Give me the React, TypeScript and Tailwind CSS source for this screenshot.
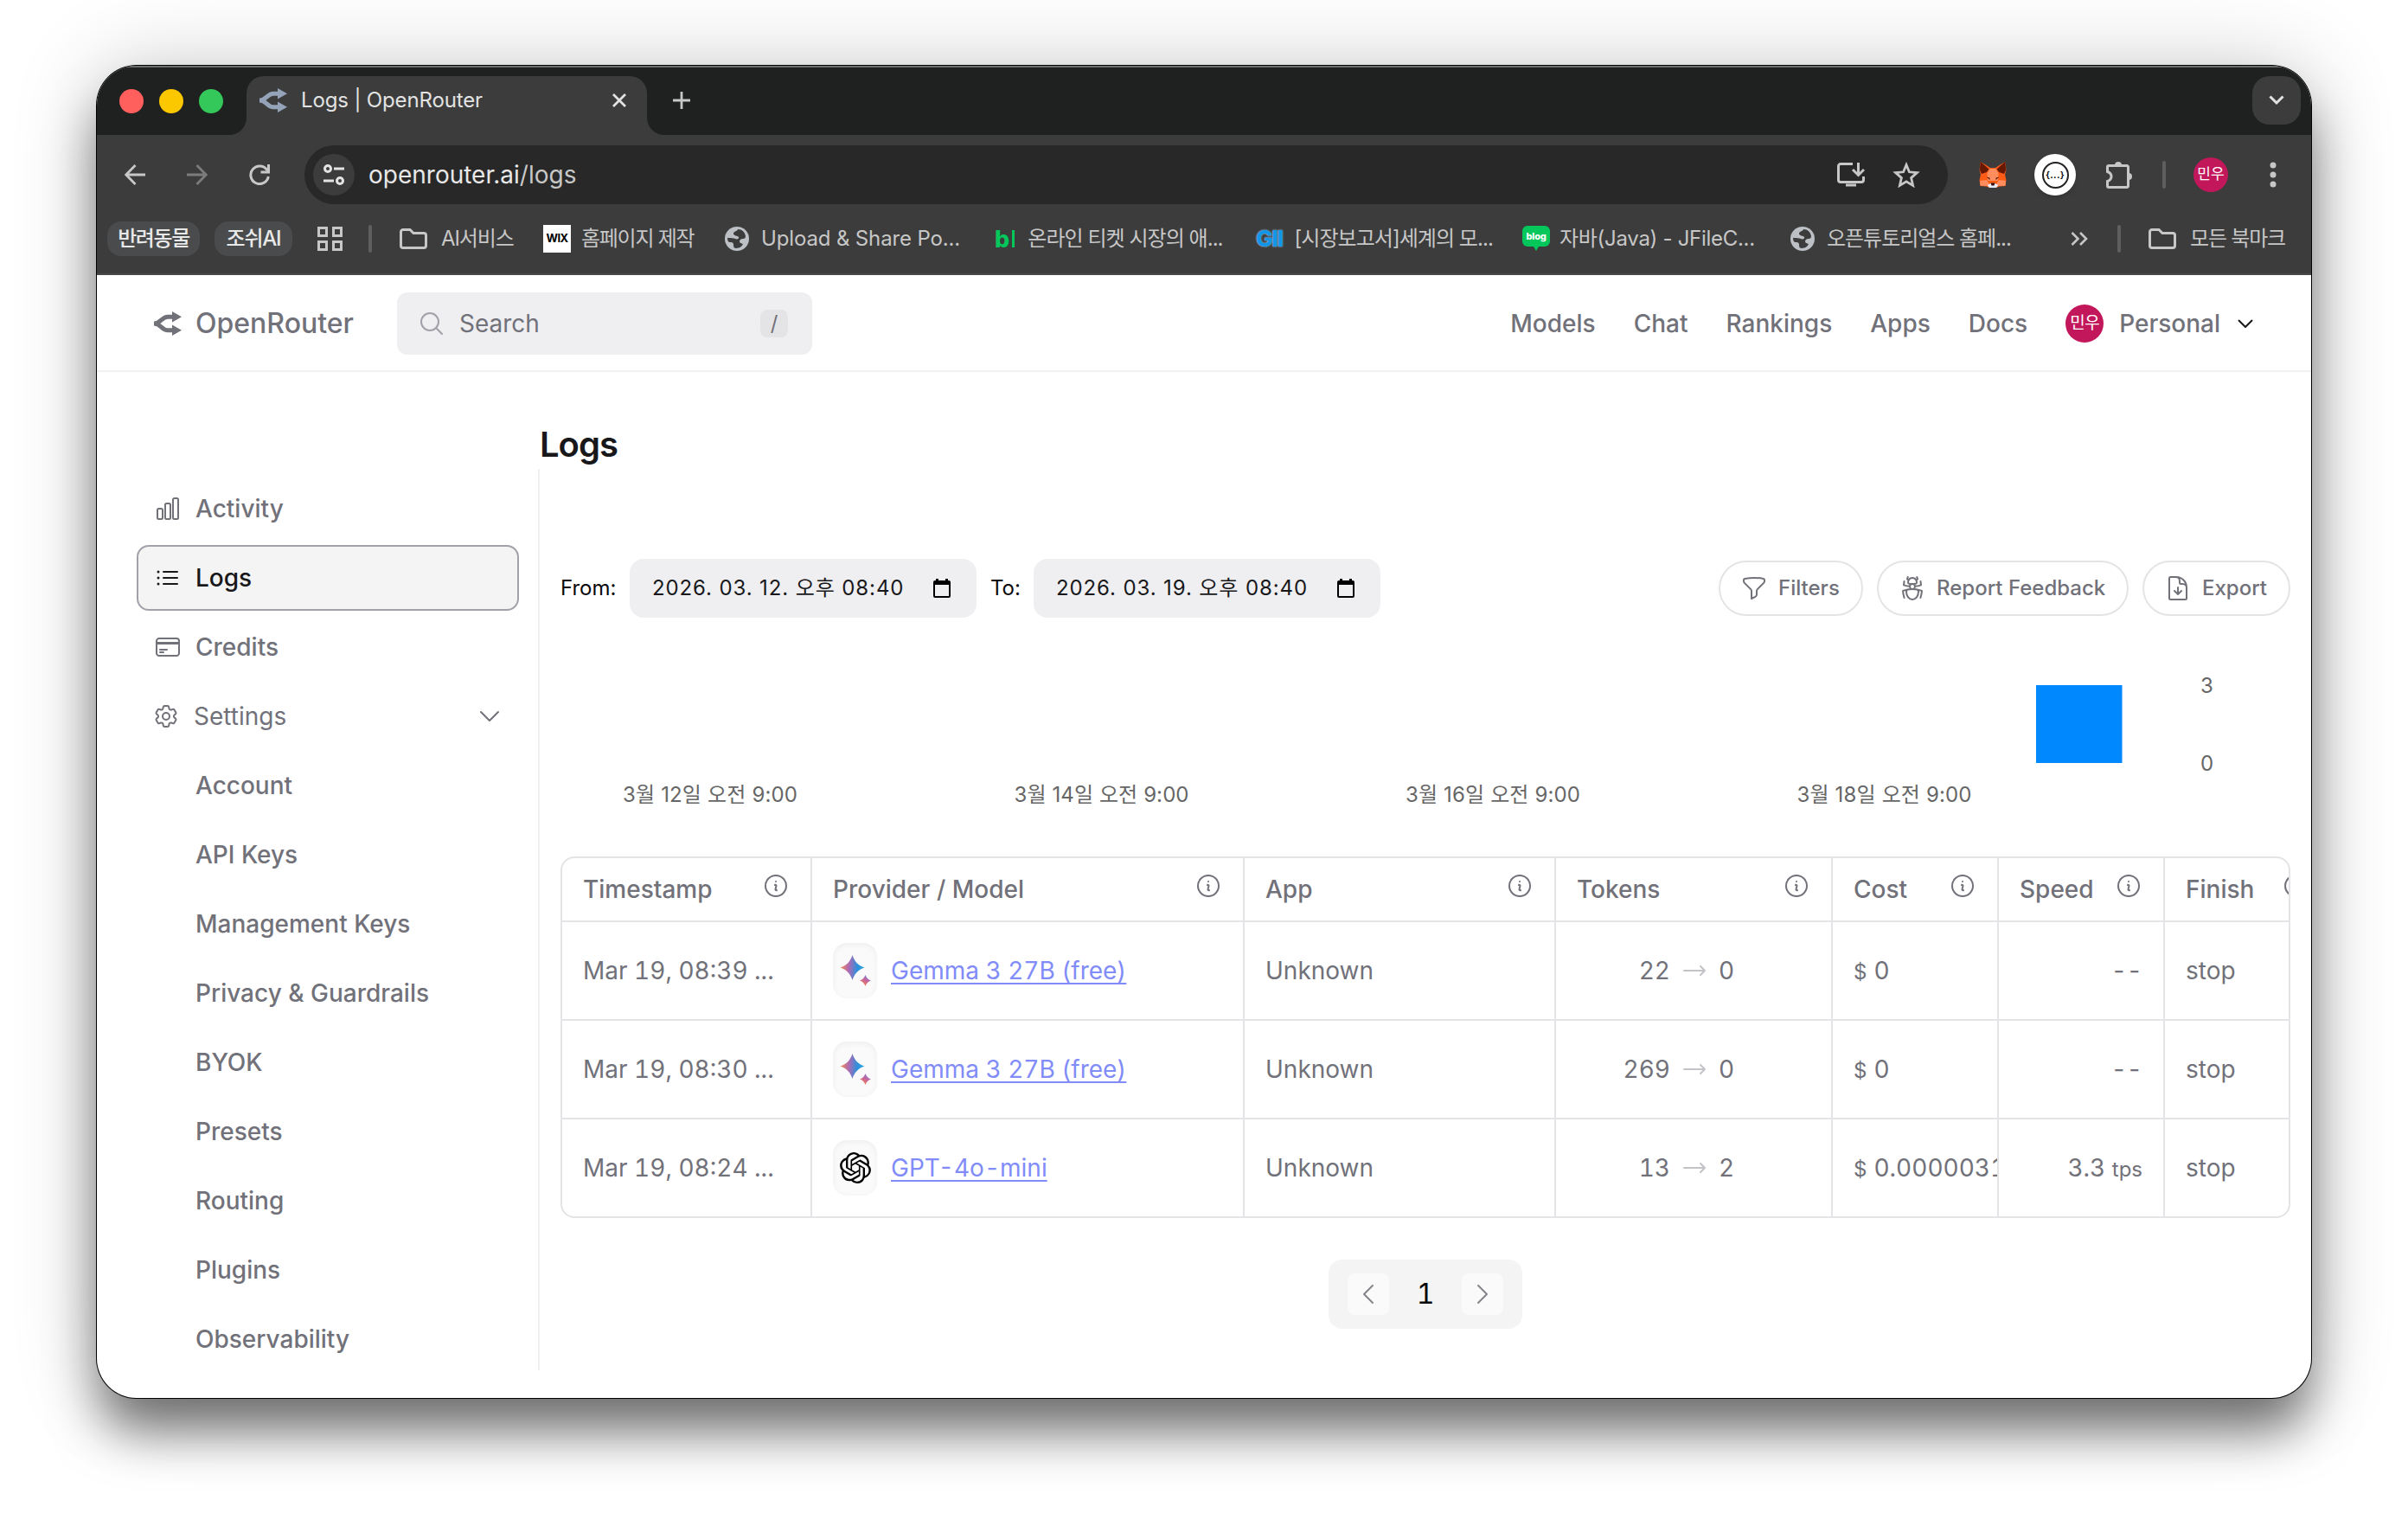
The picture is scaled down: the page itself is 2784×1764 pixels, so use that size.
import { ReactNode } from 'react'
import { SiOpenai } from 'react-icons/si'
import {
  HiOutlineArrowLongRight,
  HiOutlineBugAnt,
  HiOutlineChartBar,
  HiOutlineChevronDown,
  HiOutlineChevronLeft,
  HiOutlineChevronRight,
  HiOutlineCog6Tooth,
  HiOutlineCreditCard,
  HiOutlineDocumentArrowDown,
  HiOutlineFunnel,
  HiOutlineInformationCircle,
  HiOutlineListBullet,
  HiOutlineMagnifyingGlass,
} from 'react-icons/hi2'

/* ------------------------------------------------------------------ */
/*  Data                                                              */
/* ------------------------------------------------------------------ */

const NAV = ['Models', 'Chat', 'Rankings', 'Apps', 'Docs']

const SETTINGS = [
  'Account',
  'API Keys',
  'Management Keys',
  'Privacy & Guardrails',
  'BYOK',
  'Presets',
  'Routing',
  'Plugins',
  'Observability',
]

const ROWS = [
  { time: 'Mar 19, 08:39 ...', icon: 'gemma', model: 'Gemma 3 27B (free)', input: 22, output: 0, cost: '0', speed: null, finish: 'stop' },
  { time: 'Mar 19, 08:30 ...', icon: 'gemma', model: 'Gemma 3 27B (free)', input: 269, output: 0, cost: '0', speed: null, finish: 'stop' },
  { time: 'Mar 19, 08:24 ...', icon: 'openai', model: 'GPT-4o-mini', input: 13, output: 2, cost: '0.0000031', speed: '3.3', finish: 'stop' },
]

const COLUMNS = ['Timestamp', 'Provider / Model', 'App', 'Tokens', 'Cost', 'Speed', 'Finish']

const TICKS = ['3월 12일 오전 9:00', '3월 14일 오전 9:00', '3월 16일 오전 9:00', '3월 18일 오전 9:00']

/* ------------------------------------------------------------------ */
/*  Icons                                                             */
/* ------------------------------------------------------------------ */

function RouterLogo({ className }: { className: string }) {
  return (
    <svg viewBox="0 0 32 28" className={className} fill="none" stroke="currentColor" strokeWidth="5">
      <path d="M0 14C8 14 9 6.200 16 6.200h6M0 14c8 0 9 7.800 16 7.800h6" />
      <path d="M21 0l11 6.200-11 6.200zM21 15.600l11 6.200-11 6.200z" fill="currentColor" stroke="none" />
    </svg>
  )
}

function Globe() {
  return (
    <svg viewBox="0 0 28 28" className="size-7 shrink-0">
      <circle cx="14" cy="14" r="14" fill="#bdc1c6" />
      <path d="M15 3c-1 3-5 2-5 5s5 2 6 4-2 3-4 2-5-1-9-1c0 3 1 5 3 5s4 0 4 3 1 4 3 4c5 0 7-3 8-5-2-1-4-1-4-3s2-3 4-3 3-1 3-3c-1-5-4-8-9-8z" fill="#3c3c3c" />
    </svg>
  )
}

function Folder() {
  return (
    <svg viewBox="0 0 32 24" className="h-6 w-8 shrink-0" fill="none" stroke="#c7c7c7" strokeWidth="3">
      <path d="M4 1.500h8l4 4h12a2.500 2.500 0 0 1 2.500 2.500v12a2.500 2.500 0 0 1-2.500 2.500H4A2.500 2.500 0 0 1 1.500 20V4A2.500 2.500 0 0 1 4 1.500z" />
    </svg>
  )
}

function Fox() {
  return (
    <svg viewBox="0 0 32 30" className="h-[30px] w-8">
      <path d="M2 0l11 7h6l11-7 1.500 9-1.500 6 1.500 6-1 7-7 .500L20 30h-8l-3.500-1.500-7-.500-1-7L2 15 .500 9z" fill="#ff5c16" />
      <path d="M2 0l9.500 8.500L9 12l-6 2L.800 9zM30 0l-9.500 8.500L23 12l6 2 2.200-5z" fill="#661800" />
      <path d="M12.500 8h7l3 5-.500 9h-12l-.500-9z" fill="#ff8d5d" />
      <path d="M1 22l8-1 3 5-4 2-6.500-.500zM31 22l-8-1-3 5 4 2 6.500-.500z" fill="#ff8d5d" />
      <path d="M8.500 17.500l4 1v2.500zM23.500 17.500l-4 1v2.500z" fill="#5c1a08" />
      <path d="M9.500 27l4-2h5l4 2-2.500 3h-8z" fill="#e7ebf6" />
      <path d="M13.500 24.500h5l-1 3h-3z" fill="#33100a" />
    </svg>
  )
}

function Sparkles() {
  return (
    <svg viewBox="0 0 36 36" className="size-9">
      <defs>
        <linearGradient id="big" x1="0" x2="1" y1="0.450" y2="0.500">
          <stop offset="0" stopColor="#f58a4b" />
          <stop offset="0.350" stopColor="#b06ab3" />
          <stop offset="0.700" stopColor="#2f8fdb" />
          <stop offset="1" stopColor="#2ba6de" />
        </linearGradient>
        <linearGradient id="small" x1="0.800" x2="0.300" y1="0" y2="1">
          <stop offset="0" stopColor="#6d7fe0" />
          <stop offset="0.500" stopColor="#c9659a" />
          <stop offset="1" stopColor="#f5854b" />
        </linearGradient>
      </defs>
      <path d="M14.500 0c2.500 7.500 6.500 12 14 14.500-7.500 2.500-11.500 7-14 14.500C12 21.500 8 17 .5 14.500 8 12 12 7.500 14.500 0z" fill="url(#big)" />
      <path d="M29.500 23c1.300 3.500 3 5.200 6.500 6.500-3.500 1.300-5.200 3-6.500 6.500-1.300-3.500-3-5.200-6.500-6.500 3.500-1.300 5.200-3 6.500-6.500z" fill="url(#small)" />
    </svg>
  )
}

function Calendar() {
  return (
    <svg viewBox="0 0 20 22" className="h-[22px] w-5">
      <path d="M3 0h3v2h8V0h3v2h1a2 2 0 0 1 2 2v16a2 2 0 0 1-2 2H2a2 2 0 0 1-2-2V4a2 2 0 0 1 2-2h1zM2 7v13h16V7z" fill="black" fillRule="evenodd" />
    </svg>
  )
}

/* ------------------------------------------------------------------ */
/*  Browser chrome                                                    */
/* ------------------------------------------------------------------ */

function TabStrip() {
  return (
    <div className="flex h-20 shrink-0 items-start bg-[#1f2120] pl-[26px] pr-3 pt-3 shadow-[inset_0_2px_0_#6b6e6b]">
      <div className="mt-[15px] flex gap-[18px]">
        <span className="size-7 rounded-full bg-[#ff5f5d]" />
        <span className="size-7 rounded-full bg-[#fbc800]" />
        <span className="size-7 rounded-full bg-[#34c85a]" />
      </div>
      <div className="relative ml-[27px] flex h-[68px] w-[463px] rounded-t-[20px] bg-[#3c3c3c] pl-[15px] pr-[21px]">
        <svg viewBox="0 0 20 20" className="absolute -left-5 bottom-0 size-5"><path d="M20 0v20H0A20 20 0 0 0 20 0z" fill="#3c3c3c" /></svg>
        <svg viewBox="0 0 20 20" className="absolute -right-5 bottom-0 size-5"><path d="M0 0v20h20A20 20 0 0 1 0 0z" fill="#3c3c3c" /></svg>
        <div className="flex h-14 flex-1 items-center">
          <RouterLogo className="h-7 w-8 text-[#94a3b8]" />
          <span className="ml-4 text-2xl tracking-[-0.006em] text-[#e3e3e3]">Logs | OpenRouter</span>
          <svg viewBox="0 0 16 16" className="ml-auto mr-[3px] size-4" stroke="#e3e3e3" strokeWidth="2.800"><path d="M1 1l14 14M15 1L1 15" /></svg>
        </div>
      </div>
      <svg viewBox="0 0 20 20" className="ml-[30px] mt-[18px] size-5" stroke="#c7c7c7" strokeWidth="2.800"><path d="M10 0v20M0 10h20" /></svg>
      <div className="ml-auto flex size-14 items-center justify-center rounded-[20px] bg-[#3c3c3c]">
        <svg viewBox="0 0 18 12" className="h-3 w-[18px]" fill="none" stroke="#e3e3e3" strokeWidth="3"><path d="M1.500 1.500L9 9l7.500-7.500" /></svg>
      </div>
    </div>
  )
}

function Toolbar() {
  return (
    <div className="flex h-[92px] items-center pl-8 pr-10 text-[#c7c7c7]">
      <svg viewBox="0 0 24 24" className="size-6" fill="none" stroke="#c7c7c7" strokeWidth="2.800"><path d="M12.500 1L1.800 12l10.700 11M2 12h22" /></svg>
      <svg viewBox="0 0 24 24" className="ml-12 size-6" fill="none" stroke="#7c7c7c" strokeWidth="2.800"><path d="M11.500 1l10.700 11-10.700 11M22 12H0" /></svg>
      <svg viewBox="0 0 24 24" className="ml-12 size-6" fill="none" stroke="#c7c7c7" strokeWidth="3"><path d="M21 7a10.300 10.300 0 1 0 1.300 7M22.500 0v9h-9" /></svg>
      <div className="ml-10 flex h-[68px] w-[1900px] items-center rounded-full bg-[#282828] pl-[10px] pr-8">
        <div className="flex size-12 items-center justify-center rounded-full bg-[#3c3c3c]">
          <svg viewBox="0 0 24 24" className="size-6" fill="none" stroke="#e3e3e3" strokeWidth="3">
            <circle cx="5" cy="5" r="3.500" /><path d="M12 5h12M0 19h12" /><circle cx="19" cy="19" r="3.500" />
          </svg>
        </div>
        <span className="ml-4 text-[28px] text-[#c7c7c7]"><span className="text-[#e8e8e8]">openrouter.ai</span>/logs</span>
        <svg viewBox="0 0 32 28" className="ml-auto h-7 w-8" fill="none" stroke="#c7c7c7" strokeWidth="3">
          <path d="M18 1.500H4A2.500 2.500 0 0 0 1.500 4v16A2.500 2.500 0 0 0 4 22.500h24a2.500 2.500 0 0 0 2.500-2.500v-4M24.500 0v13M18 8l6.500 6.500L31 8M10 26h12" />
        </svg>
        <svg viewBox="0 0 32 30" className="ml-8 h-[30px] w-8" fill="none" stroke="#c7c7c7" strokeWidth="2.800">
          <path d="M16 3.500l3.400 8.300 9 .8-6.800 6 2 8.800L16 22.800l-7.600 4.600 2-8.800-6.800-6 9-.8z" />
        </svg>
      </div>
      <div className="ml-9"><Fox /></div>
      <div className="ml-8 flex size-12 items-center justify-center rounded-full bg-white shadow-md">
        <div className="flex size-[31px] items-center justify-center rounded-full border-2 border-[#222]">
          <span className="text-[11px] font-semibold leading-none tracking-wide text-black">{'{...}'}</span>
        </div>
      </div>
      <svg viewBox="0 0 32 32" className="ml-[34px] size-8" fill="none" stroke="#c7c7c7" strokeWidth="3">
        <path d="M4 5.500h21a1.500 1.500 0 0 1 1.500 1.500v22a1.500 1.500 0 0 1-1.500 1.500H4A1.500 1.500 0 0 1 2.500 29v-5.500c6-2 6-9 0-11V7A1.500 1.500 0 0 1 4 5.500z" />
        <path d="M11 5a4 4 0 0 1 8 0zM27 14a4 4 0 0 1 0 8z" fill="#c7c7c7" stroke="none" />
      </svg>
      <span className="ml-[34px] h-8 w-1 rounded-full bg-[#5f5f5f]" />
      <span className="ml-8 flex size-10 items-center justify-center rounded-full bg-[#c2185b] text-[17px] text-white">민우</span>
      <svg viewBox="0 0 8 30" className="ml-12 h-[30px] w-2" fill="#c7c7c7"><circle cx="4" cy="4" r="3.500" /><circle cx="4" cy="15" r="3.500" /><circle cx="4" cy="26" r="3.500" /></svg>
    </div>
  )
}

function Bookmark({ className, icon, children }: { className: string; icon: ReactNode; children: ReactNode }) {
  return (
    <div className={`flex shrink-0 items-center whitespace-nowrap ${className}`}>
      {icon}
      <span>{children}</span>
    </div>
  )
}

function BookmarkBar() {
  return (
    <div className="flex h-10 items-center pl-3 text-2xl text-[#c7c7c7]">
      <span className="flex h-10 w-[107px] shrink-0 items-center justify-center rounded-2xl bg-[#4a4b4d] font-medium tracking-[-0.060em] text-[#e8e8e8]">반려동물</span>
      <span className="ml-[17px] flex h-10 w-[90px] shrink-0 items-center justify-center rounded-2xl bg-[#4a4b4d] font-medium tracking-[-0.050em] text-[#e8e8e8]">조쉬AI</span>
      <svg viewBox="0 0 30 28" className="ml-[29px] h-7 w-[30px] shrink-0" fill="none" stroke="#c7c7c7" strokeWidth="3">
        <path d="M1.500 1.500h9v9h-9zM18.500 1.500h9v9h-9zM1.500 17.500h9v9h-9zM18.500 17.500h9v9h-9z" />
      </svg>
      <span className="ml-[29px] h-8 w-1 shrink-0 rounded-full bg-[#5f5f5f]" />
      <Bookmark className="ml-8 w-[166px] gap-4 tracking-[-0.045em]" icon={<Folder />}>AI서비스</Bookmark>
      <Bookmark
        className="w-[210px] gap-3 tracking-[-0.053em]"
        icon={<span className="flex size-8 items-center justify-center bg-white text-[13px] font-bold tracking-tighter text-black">WIX</span>}
      >
        홈페이지 제작
      </Bookmark>
      <Bookmark className="w-[312px] gap-[14px] tracking-[-0.006em]" icon={<Globe />}>Upload &amp; Share Po...</Bookmark>
      <Bookmark
        className="w-[302px] gap-[15px] tracking-[-0.040em]"
        icon={<span className="flex items-center gap-1 text-[27px] font-extrabold leading-none text-[#03c75a]">b<span className="h-5 w-[3px] bg-[#03c75a]" /></span>}
      >
        온라인 티켓 시장의 애...
      </Bookmark>
      <Bookmark
        className="w-[308px] gap-[14px] tracking-[-0.040em]"
        icon={<span className="text-[26px] font-extrabold leading-none tracking-tighter text-[#1296e8] [text-shadow:0_0_2px_#bfe6ff]">GII</span>}
      >
        [시장보고서]세계의 모...
      </Bookmark>
      <Bookmark
        className="w-[310px] gap-[11px] tracking-[-0.012em]"
        icon={
          <svg viewBox="0 0 32 30" className="h-[30px] w-8 shrink-0">
            <path d="M6 0h20a6 6 0 0 1 6 6v12a6 6 0 0 1-6 6h-7l-3 5-3-5H6a6 6 0 0 1-6-6V6a6 6 0 0 1 6-6z" fill="#03c75a" />
            <text x="16" y="16" textAnchor="middle" fontSize="11" fontWeight="800" fill="#fff" fontFamily="Inter, sans-serif">blog</text>
          </svg>
        }
      >
        자바(Java) - JFileC...
      </Bookmark>
      <Bookmark className="w-[324px] gap-[14px] tracking-[-0.043em]" icon={<Globe />}>오픈튜토리얼스 홈페...</Bookmark>
      <svg viewBox="0 0 20 16" className="h-4 w-5 shrink-0" fill="none" stroke="#c7c7c7" strokeWidth="2.600"><path d="M1.500 1l7 7-7 7M11 1l7 7-7 7" /></svg>
      <span className="ml-[34px] h-8 w-1 shrink-0 rounded-full bg-[#5f5f5f]" />
      <Bookmark className="ml-8 gap-4 tracking-[-0.050em]" icon={<Folder />}>모든 북마크</Bookmark>
    </div>
  )
}

/* ------------------------------------------------------------------ */
/*  Page header and sidebar                                           */
/* ------------------------------------------------------------------ */

function Header() {
  return (
    <header className="flex h-28 shrink-0 items-center border-b-2 border-[#f2f2f2] pl-[66px] pr-[67px] pt-0.5 text-[28px] font-medium text-[#71717a]">
      <RouterLogo className="h-7 w-8" />
      <span className="ml-4 w-[233px] text-[32px]">OpenRouter</span>
      <div className="flex h-[72px] w-[480px] items-center rounded-xl bg-[#efeff1] pl-6 pr-7 font-normal">
        <HiOutlineMagnifyingGlass className="size-8 text-[#a1a1aa]" />
        <span className="ml-4">Search</span>
        <kbd className="ml-auto flex size-8 items-center justify-center rounded-lg bg-[#e4e4e7] font-[Inter] text-2xl">/</kbd>
      </div>
      <nav className="ml-auto flex items-center gap-11">
        {NAV.map(item => <a key={item}>{item}</a>)}
        <div className="flex items-center">
          <span className="flex size-11 items-center justify-center rounded-full bg-[#c2185b] text-[19px] font-normal tracking-tight text-white">민우</span>
          <span className="ml-[18px]">Personal</span>
          <svg viewBox="0 0 18 10" className="ml-5 h-[10px] w-[18px]" fill="none" stroke="#18181b" strokeWidth="2"><path d="M1 1l8 8 8-8" /></svg>
        </div>
      </nav>
    </header>
  )
}

function Sidebar() {
  return (
    <aside className="flex w-[442px] flex-col gap-1 text-[28px] font-medium">
      <div className="flex h-[76px] items-center gap-4 pl-5">
        <HiOutlineChartBar className="size-8" />
        <span>Activity</span>
      </div>
      <div className="flex h-[76px] items-center gap-4 rounded-[14px] border-2 border-[#a1a1aa] bg-[#f4f4f4] pl-[18px] text-[#18181b]">
        <HiOutlineListBullet className="size-8" />
        <span>Logs</span>
      </div>
      <div className="flex h-[76px] items-center gap-4 pl-5">
        <HiOutlineCreditCard className="size-8" />
        <span>Credits</span>
      </div>
      <div className="flex h-[76px] items-center gap-4 pl-[18px] pr-[18px] font-normal">
        <HiOutlineCog6Tooth className="size-8" />
        <span>Settings</span>
        <HiOutlineChevronDown className="ml-auto size-8" />
      </div>
      {SETTINGS.map(item => (
        <div key={item} className="flex h-[76px] items-center pl-[68px]">{item}</div>
      ))}
    </aside>
  )
}

/* ------------------------------------------------------------------ */
/*  Logs page                                                         */
/* ------------------------------------------------------------------ */

function DateField({ value }: { value: string }) {
  return (
    <div className="flex h-[68px] w-[401px] items-center justify-between rounded-2xl bg-[#efeff1] pl-[26px] pr-[30px] tracking-[0.037em] text-[#18181b]">
      <span className="whitespace-nowrap">{value}</span>
      <Calendar />
    </div>
  )
}

function PillButton({ className, icon, children }: { className: string; icon: ReactNode; children: ReactNode }) {
  return (
    <button className={`flex h-16 items-center gap-3 rounded-full border-2 border-[#e4e4e4] pl-[23px] font-medium whitespace-nowrap ${className}`}>
      {icon}
      {children}
    </button>
  )
}

function Filters() {
  return (
    <div className="flex h-[68px] items-center text-2xl">
      <span className="w-20 text-[#09090b]">From:</span>
      <DateField value="2026. 03. 12. 오후 08:40" />
      <span className="ml-4 w-[50px] text-[#09090b]">To:</span>
      <DateField value="2026. 03. 19. 오후 08:40" />
      <div className="ml-auto flex gap-4">
        <PillButton className="w-[167px]" icon={<HiOutlineFunnel className="size-8" />}>Filters</PillButton>
        <PillButton className="w-[291px]" icon={<HiOutlineBugAnt className="size-8" />}>Report Feedback</PillButton>
        <PillButton className="w-[171px]" icon={<HiOutlineDocumentArrowDown className="size-8" />}>Export</PillButton>
      </div>
    </div>
  )
}

function Chart() {
  return (
    <div className="h-[276px]">
      <svg viewBox="0 0 2000 276" className="h-full w-full" fontSize="24" fill="#666">
        <rect x="1706" y="78" width="99.500" height="90" fill="#0088ff" />
        <text x="1896" y="87">3</text>
        <text x="1896" y="177">0</text>
        {TICKS.map((t, i) => (
          <text key={t} x={173 + i * 452.5} y="213" textAnchor="middle" textLength="202">{t}</text>
        ))}
      </svg>
    </div>
  )
}

function LogsTable() {
  return (
    <div className="h-[418px] overflow-hidden rounded-2xl border-2 border-[#e4e4e7] text-[28px] tabular-nums">
      <table className="w-[2044px] table-fixed border-collapse">
        <colgroup>
          <col className="w-[288px]" />
          <col className="w-[500px]" />
          <col className="w-[360px]" />
          <col className="w-[320px]" />
          <col className="w-[192px]" />
          <col className="w-[192px]" />
          <col className="w-[192px]" />
        </colgroup>
        <thead>
          <tr className="h-[73px] border-b-2 border-[#e4e4e7]">
            {COLUMNS.map(name => (
              <th key={name} className="border-r-2 border-[#e4e4e7] px-6 py-0 text-left font-medium last:border-r-0">
                <div className="flex items-center justify-between">
                  <span>{name}</span>
                  <HiOutlineInformationCircle className="-mt-2 size-8" />
                </div>
              </th>
            ))}
          </tr>
        </thead>
        <tbody>
          {ROWS.map(row => (
            <tr key={row.time} className="h-[114px] border-b-2 border-[#e4e4e7]">
              <td className="border-r-2 border-[#e4e4e7] pl-6 whitespace-nowrap">{row.time}</td>
              <td className="border-r-2 border-[#e4e4e7] pl-6">
                <div className="flex items-center gap-4">
                  <span className="flex h-16 w-[51px] items-center justify-center rounded-2xl bg-[#fafafa] shadow-[inset_0_2px_6px_#eeeeee]">
                    {row.icon === 'gemma' ? <Sparkles /> : <SiOpenai className="size-9 text-black" />}
                  </span>
                  <a className="text-[#818cf8] underline decoration-2 underline-offset-4">{row.model}</a>
                </div>
              </td>
              <td className="border-r-2 border-[#e4e4e7] pl-6">Unknown</td>
              <td className="border-r-2 border-[#e4e4e7]">
                <div className="flex items-center gap-3">
                  <span className="w-[132px] text-right">{row.input}</span>
                  <HiOutlineArrowLongRight className="size-8 text-[#c4c4c8]" />
                  <span>{row.output}</span>
                </div>
              </td>
              <td className="border-r-2 border-[#e4e4e7] pl-6">
                <div className="flex items-baseline gap-2 overflow-hidden"><span className="text-2xl">$</span>{row.cost}</div>
              </td>
              <td className="border-r-2 border-[#e4e4e7] pr-6 text-right">
                {row.speed ? <>{row.speed} <span className="text-2xl">tps</span></> : '--'}
              </td>
              <td className="pl-6">{row.finish}</td>
            </tr>
          ))}
        </tbody>
      </table>
    </div>
  )
}

function Pagination() {
  return (
    <div className="mx-auto mt-12 flex h-20 w-56 items-center justify-between rounded-2xl bg-[#f4f4f4] px-[22px] text-[32px] text-[#09090b]">
      <span className="flex size-12 items-center justify-center rounded-lg bg-[#fafafa]">
        <HiOutlineChevronLeft className="size-8 text-[#84848a]" />
      </span>
      <span className="tabular-nums">1</span>
      <span className="flex size-12 items-center justify-center rounded-lg bg-[#fafafa]">
        <HiOutlineChevronRight className="size-8 text-[#84848a]" />
      </span>
    </div>
  )
}

export default function App() {
  return (
    <div className="h-[1764px] w-[2784px] overflow-hidden bg-white px-28 pt-[76px] font-[Inter,'Noto_Sans_CJK_KR',sans-serif]">
      <div className="flex h-[1540px] w-[2560px] flex-col overflow-hidden rounded-[46px] bg-white shadow-[0_0_0_1px_#000,0_42px_58px_-4px_rgba(0,0,0,0.520),0_0_100px_rgba(0,0,0,0.200)]">
        <TabStrip />
        <div className="h-[162px] shrink-0 border-b-2 border-[#4a4848] bg-[#3c3c3c]">
          <Toolbar />
          <div className="pt-2"><BookmarkBar /></div>
        </div>
        <Header />
        <div className="flex flex-1 pl-[46px] pr-6 text-[#71717a]">
          <div className="pt-[120px]"><Sidebar /></div>
          <main className="ml-[22px] min-w-0 flex-1">
            <h1 className="pl-0.5 pt-[60px] text-[40px] font-semibold leading-[48px] tracking-[-0.025em] text-[#18181b]">Logs</h1>
            <div className="mt-1 h-[1042px] border-l-2 border-[#f0f0f0] pl-6 pt-[104px]">
              <Filters />
              <Chart />
              <LogsTable />
              <Pagination />
            </div>
          </main>
        </div>
      </div>
    </div>
  )
}
